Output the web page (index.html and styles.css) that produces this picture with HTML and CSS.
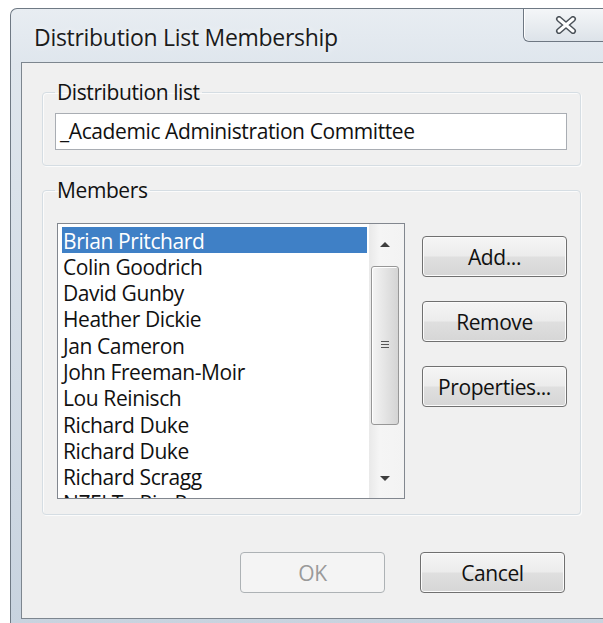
FILE: index.html
```html
<!DOCTYPE html>
<html lang="en">
<head>
<meta charset="utf-8">
<title>Distribution List Membership</title>
<link rel="stylesheet" href="styles.css">
</head>
<body>
<div class="window">
  <div class="titlebar">
    <span class="title">Distribution List Membership</span>
    <button class="close" aria-label="Close">
      <svg width="22" height="18" viewBox="0 0 22 18">
        <path d="M4 3 L18 15 M18 3 L4 15" stroke="#4b5259" stroke-width="6" stroke-linecap="round" fill="none"/>
        <path d="M4 3 L18 15 M18 3 L4 15" stroke="#ffffff" stroke-width="3" stroke-linecap="round" fill="none"/>
      </svg>
    </button>
  </div>
  <div class="client">
    <fieldset class="group group-list">
      <legend>Distribution list</legend>
      <div class="textbox">_Academic Administration Committee</div>
    </fieldset>
    <fieldset class="group group-members">
      <legend>Members</legend>
      <div class="members">
        <div class="listbox">
          <ul class="items">
            <li class="selected">Brian Pritchard</li>
            <li>Colin Goodrich</li>
            <li>David Gunby</li>
            <li>Heather Dickie</li>
            <li>Jan Cameron</li>
            <li>John Freeman-Moir</li>
            <li>Lou Reinisch</li>
            <li>Richard Duke</li>
            <li>Richard Duke</li>
            <li>Richard Scragg</li>
            <li>NZEI Te Riu Roa</li>
          </ul>
          <div class="scrollbar">
            <div class="arrow"><span class="tri up"></span></div>
            <div class="thumb"><span class="grip"></span></div>
            <div class="track"></div>
            <div class="arrow"><span class="tri down"></span></div>
          </div>
        </div>
        <div class="actions">
          <button class="btn">Add...</button>
          <button class="btn">Remove</button>
          <button class="btn">Properties...</button>
        </div>
      </div>
    </fieldset>
    <div class="footer">
      <button class="btn" disabled>OK</button>
      <button class="btn">Cancel</button>
    </div>
  </div>
</div>
</body>
</html>
```

FILE: styles.css
```css
html, body {
  margin: 0;
  padding: 0;
}

body {
  width: 603px;
  height: 623px;
  overflow: hidden;
  background: #ffffff;
  font-family: "Open Sans", "Noto Sans", sans-serif;
  font-size: 21px;
  letter-spacing: -0.4px;
  color: #111111;
}

/* outer window frame */
.window {
  margin: 8px 0 0 10px;
  width: 660px;
  border-left: 1px solid #6f7984;
  border-top: 1px solid #6f7984;
  border-top-left-radius: 7px;
  background: linear-gradient(to bottom, #e8edf2 0, #dfe6ed 55px, #c8d3df 100%);
  padding: 0 0 12px 10px;
}

.titlebar {
  display: grid;
  grid-template-columns: 502px 100px;
  height: 53px;
  align-items: start;
}

.title {
  margin-top: 14px;
  padding-left: 13px;
  line-height: 28px;
  font-size: 23px;
  letter-spacing: -0.3px;
  color: #1b1b1b;
  text-shadow: 0 0 6px rgba(255, 255, 255, 0.9);
}

.close {
  height: 33px;
  width: 100px;
  margin: 0;
  padding: 0 0 0 31px;
  border: 1px solid #6e7782;
  border-top: none;
  border-radius: 0 0 0 6px;
  background: linear-gradient(to bottom, #f4f6f8, #dde3e9);
  box-shadow: inset 1px 0 0 #ffffff;
  display: flex;
  align-items: center;
}

/* dialog client area */
.client {
  width: 630px;
  height: 539px;
  border: 1px solid #7d868f;
  background: #f0f0f0;
  padding: 16px 0 0 20px;
  box-sizing: content-box;
}

.group {
  box-sizing: border-box;
  width: 539px;
  margin: 0;
  min-width: 0;
  border: 1px solid #d5dde3;
  border-radius: 4px;
  box-shadow: inset 1px 1px 0 #fbfbfb, 1px 1px 0 #fbfbfb;
}

.group legend {
  padding: 0 2px;
  line-height: 26px;
  color: #121212;
}

.group-list {
  padding: 8px 12px 15px 12px;
}

.textbox {
  box-sizing: border-box;
  width: 512px;
  height: 37px;
  border: 1px solid #a9adb3;
  background: #ffffff;
  padding-left: 4px;
  line-height: 35px;
}

.group-members {
  margin-top: 11px;
  padding: 20px 13px 15px 14px;
}

.group-members legend {
  margin-left: -2px;
}

.members {
  display: flex;
  gap: 17px;
}

.listbox {
  box-sizing: border-box;
  width: 348px;
  height: 276px;
  border: 1px solid #82878f;
  background: #ffffff;
  display: flex;
  overflow: hidden;
}

.items {
  list-style: none;
  margin: 0 2px 0 0;
  padding: 3px 0 0 4px;
  width: 305px;
  overflow: hidden;
}

.items li {
  box-sizing: border-box;
  height: 26.3px;
  padding-top: 1.5px;
  line-height: 25px;
  padding-left: 1px;
  white-space: nowrap;
  color: #111111;
}

.items li.selected {
  background: #3f80c6;
  color: #ffffff;
}

.scrollbar {
  width: 35px;
  background: linear-gradient(to right, #e9e9e9, #f5f5f5 30%, #f3f3f3);
  display: flex;
  flex-direction: column;
  align-items: center;
}

.arrow {
  height: 40px;
  width: 100%;
  display: flex;
  align-items: center;
  justify-content: center;
  flex: none;
}

.tri {
  width: 0;
  height: 0;
  margin-right: 3px;
  border-left: 5px solid transparent;
  border-right: 5px solid transparent;
}

.tri.up {
  border-bottom: 5px solid #3e3e3e;
}

.tri.down {
  border-top: 5px solid #3e3e3e;
}

.thumb {
  box-sizing: border-box;
  width: 28px;
  height: 159px;
  margin-top: 2px;
  margin-right: 3px;
  border: 1px solid #979797;
  border-radius: 3px;
  background: linear-gradient(to right, #f4f4f4, #e6e6e6 45%, #d4d4d4 100%);
  box-shadow: inset 1px 1px 0 #ffffff;
  display: flex;
  align-items: center;
  justify-content: center;
  flex: none;
}

.grip {
  width: 8px;
  height: 9px;
  background: repeating-linear-gradient(to bottom, #555555 0, #555555 1px, transparent 1px, transparent 3px);
}

.track {
  flex: 1;
}

.actions {
  display: flex;
  flex-direction: column;
  gap: 24px;
  padding-top: 13px;
}

.btn {
  box-sizing: border-box;
  width: 145px;
  height: 41px;
  margin: 0;
  padding: 0;
  border: 1px solid #707070;
  border-radius: 4px;
  background: linear-gradient(to bottom, #f5f5f5 0%, #ececec 48%, #dfdfdf 52%, #d6d6d6 100%);
  box-shadow: inset 0 0 0 1px #fbfbfb;
  font-family: inherit;
  font-size: 21px;
  letter-spacing: -0.4px;
  color: #111111;
}

.btn:disabled {
  border-color: #adb2b5;
  background: #f4f4f4;
  box-shadow: none;
  color: #9a9a9a;
}

.footer {
  width: 539px;
  display: flex;
  justify-content: flex-end;
  gap: 35px;
  margin-top: 37px;
  padding-right: 16px;
  box-sizing: border-box;
}
```
